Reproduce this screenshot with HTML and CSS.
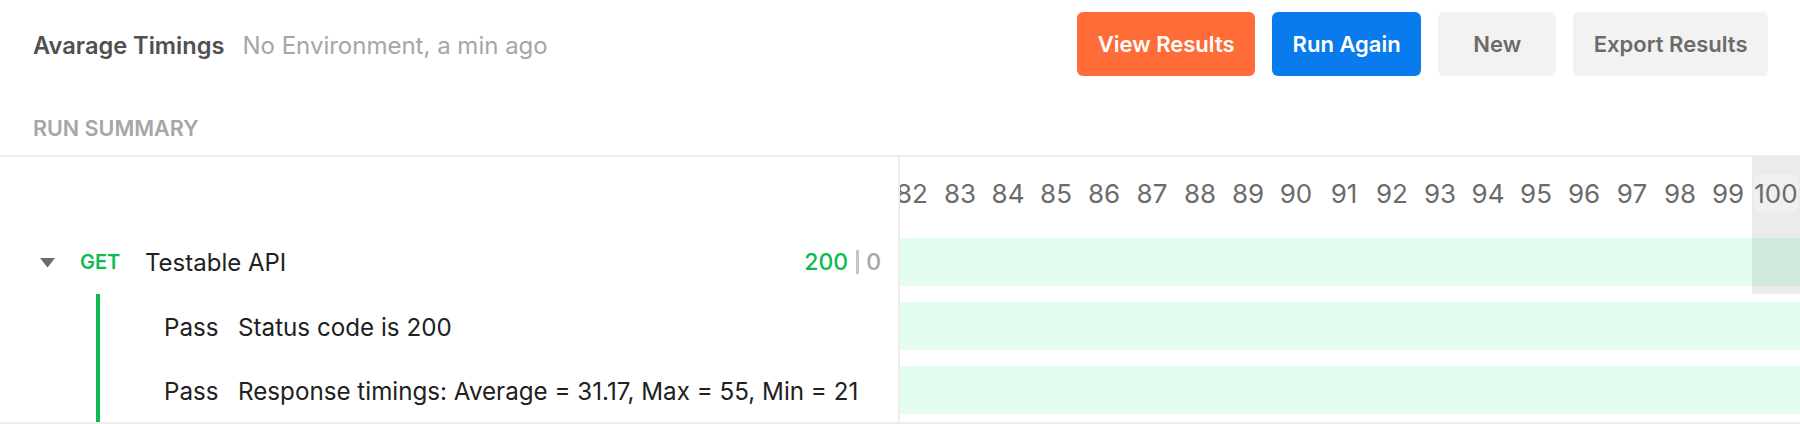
FILE: index.html
```html
<!DOCTYPE html>
<html lang="en">
<head>
<meta charset="utf-8">
<title>Run Summary</title>
<link rel="stylesheet" href="styles.css">
</head>
<body>
<div class="page">
  <header class="topbar">
    <div class="run-title">
      <span class="run-name">Avarage Timings</span>
      <span class="run-meta">No Environment, a min ago</span>
    </div>
    <div class="actions">
      <button class="btn btn-orange">View Results</button>
      <button class="btn btn-blue">Run Again</button>
      <button class="btn btn-gray">New</button>
      <button class="btn btn-gray">Export Results</button>
    </div>
  </header>
  <div class="section-label">RUN SUMMARY</div>
  <div class="summary">
    <div class="requests">
      <div class="req-head"></div>
      <div class="req-row">
        <svg class="caret" width="15" height="10" viewBox="0 0 15 10"><polygon points="0,0 15,0 7.5,9.5" fill="#6b6b6b"/></svg>
        <span class="method">GET</span>
        <span class="req-name">Testable API</span>
        <span class="stats"><span class="pass-count">200</span><span class="sep"></span><span class="fail-count">0</span></span>
      </div>
      <div class="tests">
        <div class="test-row"><span class="test-status">Pass</span><span class="test-name">Status code is 200</span></div>
        <div class="test-row"><span class="test-status">Pass</span><span class="test-name">Response timings: Average = 31.17, Max = 55, Min = 21</span></div>
      </div>
    </div>
    <div class="timeline">
      <div class="track">
        <div class="iter">82</div>
        <div class="iter">83</div>
        <div class="iter">84</div>
        <div class="iter">85</div>
        <div class="iter">86</div>
        <div class="iter">87</div>
        <div class="iter">88</div>
        <div class="iter">89</div>
        <div class="iter">90</div>
        <div class="iter">91</div>
        <div class="iter">92</div>
        <div class="iter">93</div>
        <div class="iter">94</div>
        <div class="iter">95</div>
        <div class="iter">96</div>
        <div class="iter">97</div>
        <div class="iter">98</div>
        <div class="iter">99</div>
        <div class="iter iter-current"><span class="iter-chip">100</span></div>
        <div class="bar bar-1"></div>
        <div class="bar bar-2"></div>
        <div class="bar bar-3"></div>
        <div class="col-highlight"></div>
      </div>
    </div>
  </div>
</div>
</body>
</html>
```
FILE: styles.css
```css
* { box-sizing: border-box; }
html, body { margin: 0; padding: 0; background: #ffffff; }
body {
  font-family: Inter, "Noto Sans", "Liberation Sans", sans-serif;
  color: #212121;
  width: 1800px;
  height: 424px;
  overflow: hidden;
}
.page { display: flex; flex-direction: column; height: 424px; }

.topbar {
  display: flex;
  align-items: center;
  justify-content: space-between;
  padding: 12px 32px 0 33px;
  height: 76px;
}
.run-title { display: flex; align-items: center; gap: 18px; margin-top: 2px; }
.run-name { font-size: 23.6px; font-weight: 600; color: #505050; }
.run-meta { font-size: 24px; font-weight: 400; color: #a6a6a6; }

.actions { display: flex; gap: 17px; }
.btn {
  font-family: inherit;
  font-size: 22px;
  font-weight: 600;
  height: 64px;
  min-width: 118px;
  padding: 0 20.5px;
  border: none;
  border-radius: 6px;
  cursor: pointer;
}
.btn-orange { background: #ff6c37; color: #ffffff; }
.btn-blue { background: #097bed; color: #ffffff; }
.btn-gray { background: #f2f2f2; color: #6b6b6b; }

.section-label {
  font-size: 21.5px;
  font-weight: 600;
  color: #a6a6a6;
  line-height: 24px;
  padding: 40px 0 15px 33px;
  border-bottom: 2px solid #ededed;
}

.summary { display: flex; flex: 1; min-height: 0; border-bottom: 2px solid #ededed; }
.requests { width: 900px; border-right: 2px solid #ededed; flex: none; }
.req-head { height: 73px; }
.req-row {
  display: flex;
  align-items: center;
  height: 64px;
  padding: 0 17px 0 40px;
}
.caret { flex: none; margin-right: 25px; margin-top: 1px; }
.method { width: 65px; font-size: 20px; font-weight: 600; color: #0cbb52; }
.req-name { font-size: 24px; color: #212121; }
.stats { margin-left: auto; display: flex; align-items: center; font-size: 23px; font-weight: 500; }
.pass-count { color: #0cbb52; }
.sep { width: 3px; height: 24px; background: #c4c4c4; margin: 0 7px 0 8px; }
.fail-count { color: #a6a6a6; }

.tests { margin-left: 96px; border-left: 4px solid #0cbb52; }
.test-row {
  display: flex;
  align-items: center;
  height: 64px;
  padding-left: 64px;
  font-size: 24.2px;
  padding-top: 2px;
}
.test-status { width: 74px; }

.timeline { flex: 1; overflow: hidden; }
.track {
  display: grid;
  grid-template-columns: repeat(19, 48px);
  grid-template-rows: 73px 64px 64px 64px;
  margin-left: -12px;
}
.iter {
  grid-row: 1;
  display: flex;
  align-items: center;
  justify-content: center;
  font-size: 26px;
  color: #6b6b6b;
  z-index: 2;
}
.iter-current { grid-column: 19; }
.iter-chip {
  padding: 4px 0;
  border-radius: 6px;
  background: rgba(255, 255, 255, 0.25);
}
.bar { grid-column: 1 / -1; margin: 8px 0; background: #e3fcf0; }
.bar-1 { grid-row: 2; }
.bar-2 { grid-row: 3; }
.bar-3 { grid-row: 4; }
.col-highlight {
  grid-column: 19;
  grid-row: 1 / 3;
  background: rgba(0, 0, 0, 0.08);
  z-index: 1;
}
```
